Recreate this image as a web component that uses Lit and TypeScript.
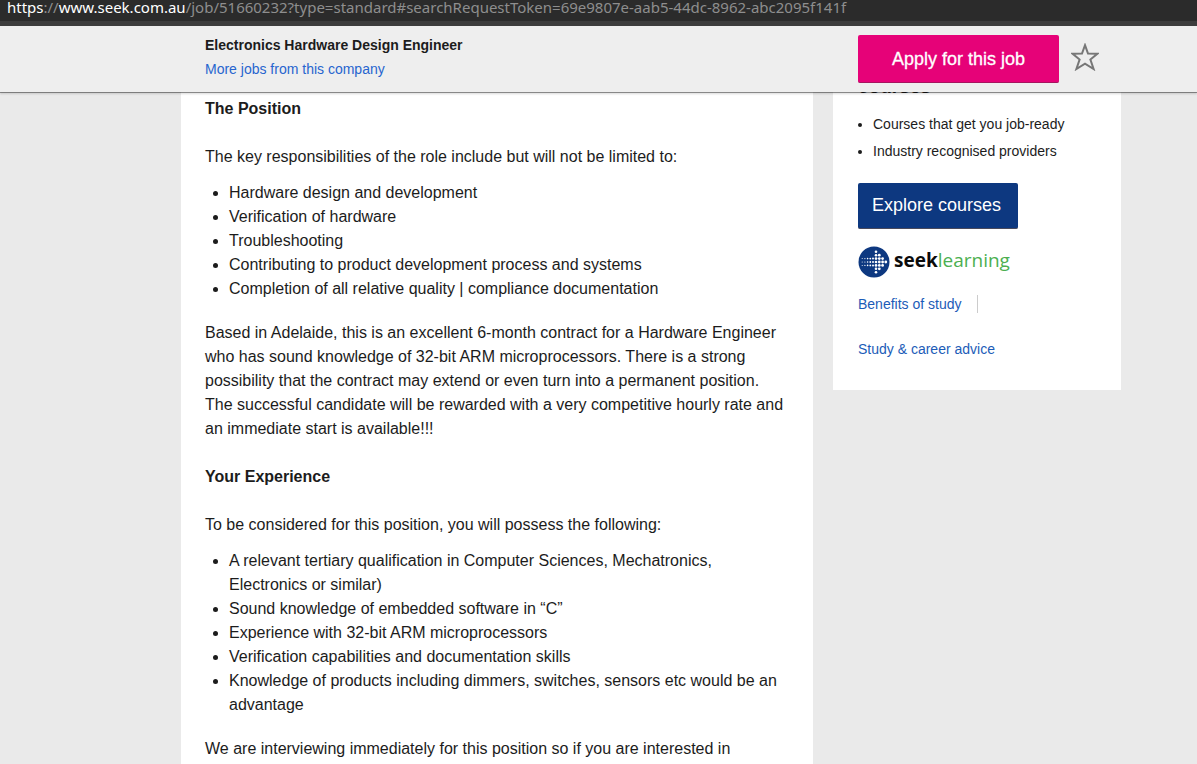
import { LitElement, html, css, svg } from "lit";
import { customElement } from "lit/decorators.js";

// Each entry: column x, dot radius, number of dots above and below the middle row.
const DOT_COLUMNS: [number, number, number][] = [
  [4.2, 0.5, 1],
  [6.9, 0.6, 1],
  [9.6, 0.8, 1],
  [12.3, 0.9, 1],
  [15, 1, 1],
  [18, 1.3, 3],
  [21.3, 1.4, 2],
  [24.6, 1.4, 1],
  [27.8, 1.4, 0],
];

@customElement("seek-learning-logo")
export class SeekLearningLogo extends LitElement {
  static styles = css`
    :host { display: flex; align-items: flex-start; gap: 4px; height: 32px; }
    .mark { width: 32px; height: 32px; flex: none; }
    .word { font: 400 19px/28px "Open Sans", sans-serif; white-space: nowrap; }
    .seek { font-weight: 700; color: #0b0b0b; }
    .learning { font-weight: 400; color: #4caf50; }
  `;

  render() {
    return html`
      <svg class="mark" viewBox="0 0 32 32" aria-hidden="true">
        <circle cx="16" cy="16" r="15.5" fill="#0d3880"></circle>
        ${DOT_COLUMNS.map(([x, r, n]) =>
          Array.from({ length: n * 2 + 1 }, (_, i) => i - n).map(
            (row) => svg`<circle cx=${x} cy=${16 + row * 3.4} r=${r} fill="#fff"></circle>`
          )
        )}
      </svg>
      <span class="word"><span class="seek">seek</span><span class="learning">learning</span></span>
    `;
  }
}

@customElement("app-root")
export class AppRoot extends LitElement {
  static styles = css`
    :host {
      display: flex;
      flex-direction: column;
      height: 100vh;
      overflow: hidden;
      background: #eaeaea;
      color: #1c1c1c;
      font: 16px/24px "Liberation Sans", Arial, sans-serif;
    }
    * { box-sizing: border-box; }
    a { color: #2765cf; text-decoration: none; }
    ul { margin: 0; padding: 0; }
    .address {
      flex: none;
      height: 26px;
      padding-left: 7px;
      background: #2b2b2b;
      border-bottom: 5px solid #3c3c3c;
      color: #8e8e8e;
      font: 15px/14px "Noto Sans", sans-serif;
      white-space: nowrap;
    }
    .host { color: #fff; }
    .wrap {
      display: grid;
      grid-template-columns: minmax(0, 632px) 288px;
      column-gap: 20px;
      margin-left: 181px;
      margin-right: 24px;
    }
    .bar {
      flex: none;
      height: 66px;
      background: #eee;
      box-shadow: 0 1px 0 rgba(0, 0, 0, 0.38), 0 2px 2px rgba(0, 0, 0, 0.15);
      z-index: 1;
    }
    .heading { padding: 7px 24px 0; }
    .title { margin: 0; font-size: 14px; line-height: 24px; font-weight: 700; }
    .more { font-size: 14px; }
    .actions { display: flex; align-items: center; gap: 12px; padding: 9px 0 9px 25px; }
    button { border: 0; padding: 0; font: inherit; cursor: pointer; }
    .apply {
      width: 201px;
      height: 48px;
      border-radius: 2px;
      border-bottom: 1px solid #a5155f;
      background: #e60278;
      color: #fff;
      font-size: 18px;
      -webkit-text-stroke: 0.3px #fff;
    }
    .save { display: flex; padding-bottom: 4px; background: none; }
    .save svg { width: 28px; height: 28px; }
    .page { flex: 1; min-height: 0; overflow: hidden; align-items: start; }
    .job { padding: 5px 24px 24px; background: #fff; }
    .job h2 { margin: 0 0 24px; font-size: 16px; line-height: 24px; }
    .job p { margin: 0; }
    .job ul { margin: 12px 0 20px; padding-left: 24px; }
    .job p + h2 { margin-top: 24px; }
    .learn { padding: 0 25px 32px; background: #fff; }
    .learn h2 { margin: -17px 0 12px; font-size: 19px; line-height: 24px; }
    .learn li { margin-left: 15px; font-size: 14px; line-height: 27px; }
    .explore {
      display: block;
      width: 160px;
      height: 46px;
      margin: 18px 0 17px;
      padding: 0 14px 2px;
      border-radius: 2px;
      border-bottom: 1px solid #4a4a5c;
      background: #0d3880;
      color: #fff;
      font-size: 18px;
      text-align: left;
      white-space: nowrap;
    }
    .links { display: flex; flex-direction: column; align-items: flex-start; gap: 27px; margin-top: 17px; font-size: 14px; line-height: 18px; }
    .links a { color: #1c5cb8; }
    .divided { padding-right: 15px; border-right: 1px solid #ccc; }
  `;

  render() {
    return html`
      <div class="address"><span class="host">https</span>://<span class="host">www.seek.com.au</span>/job/51660232?type=standard#searchRequestToken=69e9807e-aab5-44dc-8962-abc2095f141f</div>
      <header class="bar">
        <div class="wrap">
          <div class="heading">
            <h1 class="title">Electronics Hardware Design Engineer</h1>
            <a class="more" href="#">More jobs from this company</a>
          </div>
          <div class="actions">
            <button class="apply">Apply for this job</button>
            <button class="save" aria-label="Save job">
              <svg viewBox="0 0 28 28" fill="none" stroke="#777" stroke-width="2" stroke-linejoin="miter">
                <path d="M14 2.2 L17 10.6 L26.3 10.8 L19.4 16.6 L22.6 26 L14 20.7 L5.4 26 L8.6 16.6 L1.7 10.8 L11 10.6 Z"></path>
              </svg>
            </button>
          </div>
        </div>
      </header>
      <main class="wrap page">
        <article class="job">
          <h2>The Position</h2>
          <p>The key responsibilities of the role include but will not be limited to:</p>
          <ul>
            <li>Hardware design and development</li>
            <li>Verification of hardware</li>
            <li>Troubleshooting</li>
            <li>Contributing to product development process and systems</li>
            <li>Completion of all relative quality | compliance documentation</li>
          </ul>
          <p>Based in Adelaide, this is an excellent 6-month contract for a Hardware Engineer who has sound knowledge of 32-bit ARM microprocessors. There is a strong possibility that the contract may extend or even turn into a permanent position. The successful candidate will be rewarded with a very competitive hourly rate and an immediate start is available!!!</p>
          <h2>Your Experience</h2>
          <p>To be considered for this position, you will possess the following:</p>
          <ul>
            <li>A relevant tertiary qualification in Computer Sciences, Mechatronics, Electronics or similar)</li>
            <li>Sound knowledge of embedded software in “C”</li>
            <li>Experience with 32-bit ARM microprocessors</li>
            <li>Verification capabilities and documentation skills</li>
            <li>Knowledge of products including dimmers, switches, sensors etc would be an advantage</li>
          </ul>
          <p>We are interviewing immediately for this position so if you are interested in</p>
        </article>
        <aside class="learn">
          <h2>courses</h2>
          <ul>
            <li>Courses that get you job-ready</li>
            <li>Industry recognised providers</li>
          </ul>
          <button class="explore">Explore courses</button>
          <seek-learning-logo></seek-learning-logo>
          <nav class="links">
            <a class="divided" href="#">Benefits of study</a>
            <a href="#">Study &amp; career advice</a>
          </nav>
        </aside>
      </main>
    `;
  }
}
